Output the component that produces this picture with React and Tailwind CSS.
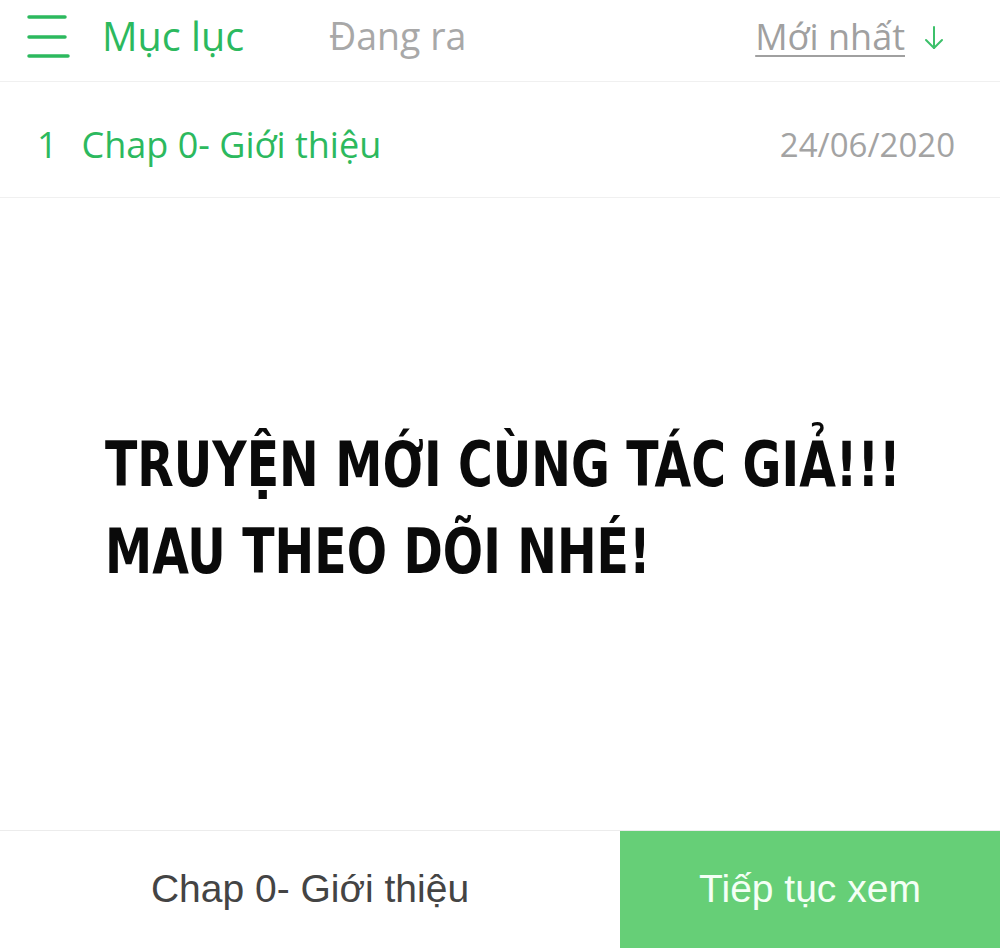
import React from 'react';

const green = 'text-[#2cb95e]';

const Header = () => (
  <div className="flex items-center h-[82px] border-b border-[#f0f0f0] pl-[27px] pr-[55px] pb-[8px]">
    <svg width="44" height="44" viewBox="0 0 44 44" className="shrink-0">
      <g stroke="#2cb95e" strokeWidth="3.5" strokeLinecap="round">
        <line x1="2" y1="2" x2="38" y2="2" />
        <line x1="2" y1="22" x2="38" y2="22" />
        <line x1="2" y1="41" x2="41" y2="41" />
      </g>
    </svg>
    <span className={`ml-[31px] text-[39.5px] ${green}`}>Mục lục</span>
    <span className="ml-[85px] text-[37.5px] text-[#a8a8a8]">Đang ra</span>
    <div className="ml-auto flex items-center">
      <span className="text-[36px] text-[#a0a0a0] underline underline-offset-[5px] decoration-[2px]">Mới nhất</span>
      <svg width="22" height="24" viewBox="0 0 22 24" className="ml-[18px] mt-[2px]">
        <g stroke="#3cc06a" strokeWidth="2" fill="none" strokeLinecap="round" strokeLinejoin="round">
          <line x1="11" y1="1" x2="11" y2="22" />
          <polyline points="3,14 11,22 19,14" />
        </g>
      </svg>
    </div>
  </div>
);

const ChapterRow = () => (
  <div className="flex items-center h-[116px] border-b border-[#f0f0f0] pl-[37px] pr-[45px] pt-[10px]">
    <span className={`text-[36px] ${green}`}>1</span>
    <span className={`ml-[24px] text-[36px] ${green}`}>Chap 0- Giới thiệu</span>
    <span className="ml-auto text-[33px] text-[#a3a3a3]">24/06/2020</span>
  </div>
);

export default function App() {
  return (
    <div className="w-[1000px] h-[948px] bg-white flex flex-col overflow-hidden" style={{ fontFamily: '"Open Sans", Arial, sans-serif' }}>
      <Header />
      <ChapterRow />
      <div className="flex-1 flex items-center pl-[105px] pb-[12px]">
        <div
          className="font-bold text-[62px] leading-[87px] text-[#0a0a0a] whitespace-nowrap origin-left scale-x-[0.85]"
          style={{ fontFamily: '"DejaVu Sans Condensed", "DejaVu Sans", sans-serif' }}
        >
          <div>TRUYỆN MỚI CÙNG TÁC GIẢ!!!</div>
          <div>MAU THEO DÕI NHÉ!</div>
        </div>
      </div>
      <div className="flex h-[118px] border-t border-[#ececec]" style={{ fontFamily: '"Liberation Sans", Arial, sans-serif' }}>
        <div className="w-[620px] flex items-center justify-center text-[39px] text-[#444]">Chap 0- Giới thiệu</div>
        <div className="flex-1 bg-[#66cf77] flex items-center justify-center text-[39px] text-[#f4fff5]">Tiếp tục xem</div>
      </div>
    </div>
  );
}
